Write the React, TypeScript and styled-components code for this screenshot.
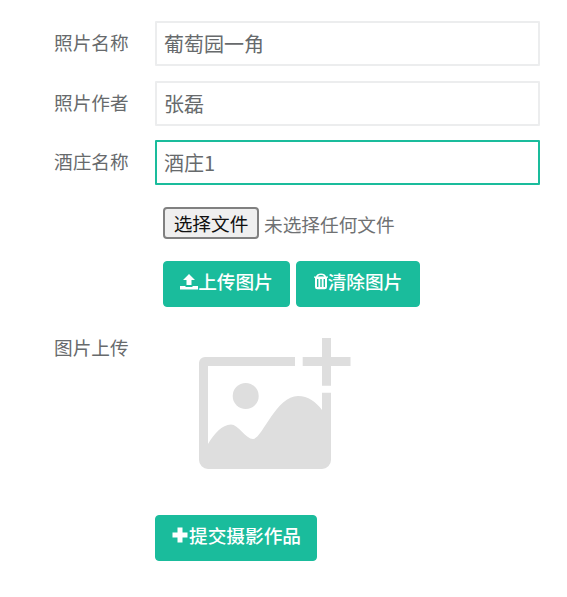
import React from "react";
import styled, { createGlobalStyle } from "styled-components";

const Global = createGlobalStyle`
  html, body { margin: 0; padding: 0; background: #fff; }
  body { font-family: "Noto Sans CJK SC", "Liberation Sans", sans-serif; color: #676a6c; }
`;

const Page = styled.form`
  width: 567px;
  height: 597px;
  box-sizing: border-box;
  padding: 21px 27px 0 54px;
  display: flex;
  flex-direction: column;
  overflow: hidden;
`;

const Row = styled.div<{ $mb?: number }>`
  display: grid;
  grid-template-columns: 101px 385px;
  margin-bottom: ${(p) => p.$mb ?? 0}px;
`;

const Label = styled.label`
  font-size: 18.67px;
  line-height: 26px;
  padding-top: 8px;
  white-space: nowrap;
`;

const UploadLabel = styled(Label)`
  padding-top: 0;
  margin-top: -1px;
`;

const TextInput = styled.input<{ $focus?: boolean }>`
  box-sizing: border-box;
  width: 385px;
  height: 45px;
  padding: 0 7px 1px;
  background: #fff;
  border: 2px solid ${(p) => (p.$focus ? "#1abc9c" : "#ecedee")};
  border-radius: 1px;
  outline: none;
  font-family: inherit;
  font-size: 20px;
  color: #676a6c;
`;

const Actions = styled.div`
  grid-column: 2;
  padding-left: 8px;
  display: flex;
  flex-direction: column;
`;

const FileLine = styled.div`
  display: flex;
  align-items: center;
  gap: 5px;
  height: 32px;
  margin-bottom: 22px;
  font-size: 18.67px;
  color: #6f7173;
`;

const FilePick = styled.button`
  box-sizing: border-box;
  width: 96px;
  height: 32px;
  padding: 0;
  background: #efefef;
  border: 2px solid #808080;
  border-radius: 4px;
  font-family: inherit;
  font-size: 18.67px;
  line-height: 1;
  color: #111;
`;

const ButtonGroup = styled.div`
  display: flex;
  gap: 6px;
`;

const Primary = styled.button<{ $w: number }>`
  box-sizing: border-box;
  width: ${(p) => p.$w}px;
  height: 46px;
  padding: 0 0 7px;
  display: inline-flex;
  align-items: center;
  justify-content: center;
  background: #1abc9c;
  border: 1px solid #1abc9c;
  border-radius: 4px;
  font-family: inherit;
  font-size: 18.67px;
  font-weight: 500;
  color: #fff;
  white-space: nowrap;
`;

const Placeholder = styled.svg`
  display: block;
  width: 200px;
  height: 140px;
`;

const SubmitRow = styled.div`
  padding-left: 101px;
`;

const Glyph = styled.svg<{ $w?: number }>`
  width: ${(p) => p.$w ?? 18}px;
  height: 18px;
  flex: none;
  fill: #fff;
`;

export default function App() {
  return (
    <>
      <Global />
      <Page onSubmit={(e) => e.preventDefault()}>
        <Row $mb={15}>
          <Label>照片名称</Label>
          <TextInput defaultValue="葡萄园一角" />
        </Row>
        <Row $mb={14}>
          <Label>照片作者</Label>
          <TextInput defaultValue="张磊" />
        </Row>
        <Row $mb={22}>
          <Label>酒庄名称</Label>
          <TextInput $focus defaultValue="酒庄1" />
        </Row>
        <Row $mb={28}>
          <Actions>
            <FileLine>
              <FilePick type="button">选择文件</FilePick>
              <span>未选择任何文件</span>
            </FileLine>
            <ButtonGroup>
              <Primary type="button" $w={127}>
                <Glyph viewBox="0 0 18 18">
                  <path d="M9 2l6 6h-3.5v5h-5V8H3z" />
                  <path d="M0 14h5.5v1h7v-1H18v3.5H0z" />
                </Glyph>
                上传图片
              </Primary>
              <Primary type="button" $w={124}>
                <Glyph $w={14} viewBox="0 0 14 18">
                  <path
                    fillRule="evenodd"
                    d="M7 1.5c2.6 0 4.6 1.2 5 3H14v1.3h-1v9.2a2.2 2.2 0 0 1-2.2 2.2H3.2A2.2 2.2 0 0 1 1 15V5.8H0V4.5h2c.4-1.8 2.4-3 5-3zM3.6 4.5h6.8C10 3.5 8.7 2.9 7 2.9s-3 .6-3.4 1.6zM3 7v8h1.4V7zm3.3 0v8h1.4V7zm3.3 0v8H11V7z"
                  />
                </Glyph>
                清除图片
              </Primary>
            </ButtonGroup>
          </Actions>
        </Row>
        <Row $mb={40}>
          <UploadLabel>图片上传</UploadLabel>
          <Placeholder viewBox="155 335 200 140">
            <g fill="#dedede">
              <path d="M322 338h9v19h19.5v9H331v19.7h-9V366h-19.3v-9H322z" />
              <path d="M205 357h90v9h-87v78C214 434 222 424.500 231 424.500C238 424.500 246 439 253 439C262 439 276 396 298 396C308 396 316 402 322 410V392.700h9V460a9 9 0 0 1-9 9H208a9 9 0 0 1-9-9v-97a6 6 0 0 1 6-6z" />
              <circle cx="245.700" cy="396" r="13" />
            </g>
          </Placeholder>
        </Row>
        <SubmitRow>
          <Primary type="submit" $w={162}>
            <Glyph viewBox="0 0 18 18">
              <path d="M6.5 1.500h5v5h5v5h-5v5h-5v-5h-5v-5h5z" />
            </Glyph>
            提交摄影作品
          </Primary>
        </SubmitRow>
      </Page>
    </>
  );
}
